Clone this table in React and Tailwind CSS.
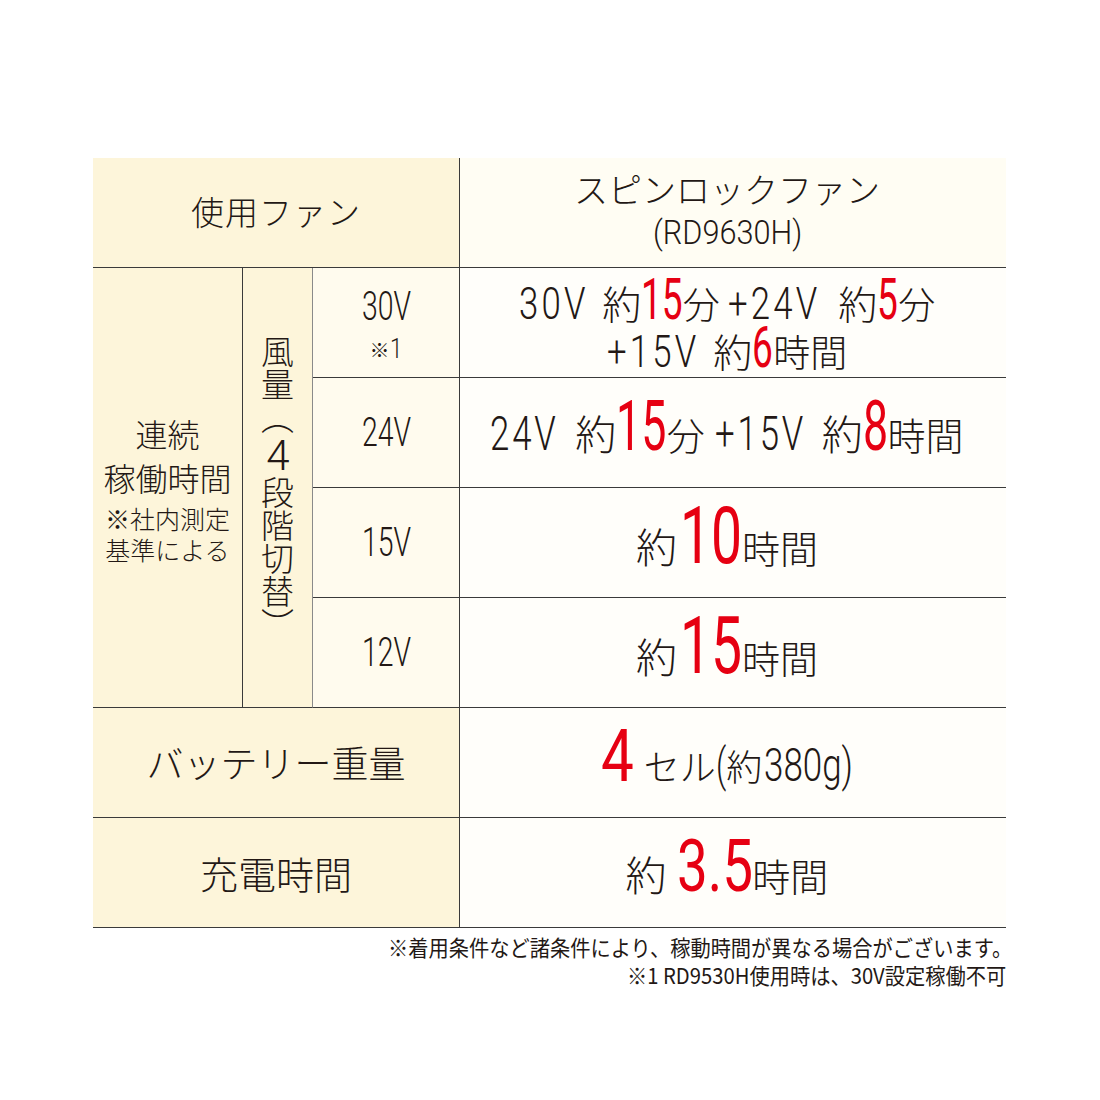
import React, { useLayoutEffect, useRef, useState } from 'react';

const jp = "font-['Noto_Sans_CJK_JP',sans-serif] font-light";
const rb = "font-['Roboto','Liberation_Sans',sans-serif]";

// condensed text: squeezes horizontally and keeps the layout width in step
function Cn({ children, s = 0.8, className = '', outer = '' }) {
  const ref = useRef(null);
  const [w, setW] = useState();
  useLayoutEffect(() => {
    const measure = () => ref.current && setW(ref.current.offsetWidth * s);
    measure();
    if (document.fonts) document.fonts.ready.then(measure);
  }, [s]);
  return (
    <span className={`inline-block whitespace-nowrap ${outer}`} style={{ width: w }}>
      <span ref={ref} className={`inline-block origin-left whitespace-nowrap ${className}`} style={{ transform: `scaleX(${s})` }}>
        {children}
      </span>
    </span>
  );
}

function Red({ children, size, s, outer = '' }) {
  return <Cn s={s} outer={outer} className={`${rb} ${size} font-normal text-[#e60012] leading-none`}>{children}</Cn>;
}

function Num({ children, size, s, className = '', outer = '' }) {
  return <Cn s={s} outer={outer} className={`${rb} ${size} font-light leading-none ${className}`}>{children}</Cn>;
}

function Jp({ children, className = '', lead = 'leading-none' }) {
  return <span className={`${jp} ${lead} whitespace-nowrap ${className}`}>{children}</span>;
}

const line = 'border-[#3a3a3a]';
const head = `bg-[#fdf5da] border-b ${line}`;
const volt = `bg-[#fffbee] border-r border-b ${line} flex flex-col items-center justify-center`;
const val = `bg-[#fffefa] border-b ${line} flex flex-col items-center justify-center pr-[12px]`;

function Volt({ v }) {
  return (
    <div className={volt}>
      <Num size="text-[40px]" s={0.71}>{v}</Num>
    </div>
  );
}

function Hours({ n }) {
  return (
    <div className={val}>
      <div className="flex items-baseline pb-[14px]">
        <Jp className="text-[41px]">約</Jp>
        <Red size="text-[80px]" s={0.69} outer="ml-[3px]">{n}</Red>
        <Jp className="text-[38px]">時間</Jp>
      </div>
    </div>
  );
}

export default function App() {
  return (
    <div className="w-[1100px] h-[1100px] bg-white text-[#231815] pt-[158px] pl-[93px]">
      <div className="grid grid-cols-[150px_70px_147px_546px] grid-rows-[repeat(7,110px)] w-[913px]">
        {/* header */}
        <div className={`col-span-3 ${head} border-r flex items-center justify-center`}>
          <Jp className="text-[33px] tracking-[1px] mt-[-2px]">使用ファン</Jp>
        </div>
        <div className={`bg-[#fffdf3] border-b ${line} flex flex-col items-center justify-center pr-[12px]`}>
          <Jp className="text-[34px] mt-[-4px]">スピンロックファン</Jp>
          <div className="mt-[10px]">
            <Num size="text-[33px]" s={0.93}>(RD9630H)</Num>
          </div>
        </div>

        {/* running time */}
        <div className={`row-span-4 ${head} border-r flex flex-col items-center justify-center`}>
          <Jp className="text-[32px]" lead="leading-[44px]">連続</Jp>
          <Jp className="text-[32px]" lead="leading-[44px]">稼働時間</Jp>
          <span className={`${jp} text-[25px] leading-[31px] mt-[4px] text-center whitespace-nowrap`}>
            ※社内測定
            <br />
            基準による
          </span>
        </div>
        <div className={`row-span-4 ${head} border-r border-r-[#8a8a8a] flex items-center justify-center`}>
          <span className={`${jp} text-[33px] leading-none [writing-mode:vertical-rl]`}>
            風量（<span className={`[text-combine-upright:all] ${rb} font-light text-[42px]`}>4</span>段階切替）
          </span>
        </div>

        <div className={volt}>
          <div className="mt-[6px]">
            <Num size="text-[40px]" s={0.71}>30V</Num>
          </div>
          <div className="flex items-baseline mt-[8px]">
            <Jp className="text-[20px]">※</Jp>
            <Num size="text-[28px]" s={0.8}>1</Num>
          </div>
        </div>
        <div className={val}>
          <div className="flex items-baseline">
            <Num size="text-[44px]" s={0.79} className="tracking-[4px]">30V</Num>
            <Jp className="text-[39px] ml-[14px]">約</Jp>
            <Red size="text-[58px]" s={0.64}>15</Red>
            <Jp className="text-[37px]">分</Jp>
            <Num size="text-[44px]" s={0.79} className="tracking-[4px]" outer="ml-[8px]">+24V</Num>
            <Jp className="text-[39px] ml-[18px]">約</Jp>
            <Red size="text-[58px]" s={0.64}>5</Red>
            <Jp className="text-[37px]">分</Jp>
          </div>
          <div className="flex items-baseline mt-[-10px]">
            <Num size="text-[44px]" s={0.79} className="tracking-[4px]">+15V</Num>
            <Jp className="text-[39px] ml-[14px]">約</Jp>
            <Red size="text-[58px]" s={0.64}>6</Red>
            <Jp className="text-[37px]">時間</Jp>
          </div>
        </div>

        <Volt v="24V" />
        <div className={val}>
          <div className="flex items-baseline pb-[14px]">
            <Num size="text-[49px]" s={0.71} className="tracking-[4px]">24V</Num>
            <Jp className="text-[41px] ml-[16px]">約</Jp>
            <Red size="text-[70px]" s={0.64}>15</Red>
            <Jp className="text-[38px]">分</Jp>
            <Num size="text-[49px]" s={0.71} className="tracking-[4px]" outer="ml-[10px]">+15V</Num>
            <Jp className="text-[41px] ml-[16px]">約</Jp>
            <Red size="text-[70px]" s={0.64}>8</Red>
            <Jp className="text-[38px]">時間</Jp>
          </div>
        </div>

        <Volt v="15V" />
        <Hours n="10" />

        <Volt v="12V" />
        <Hours n="15" />

        {/* battery weight */}
        <div className={`col-span-3 ${head} border-r flex items-center justify-center`}>
          <Jp className="text-[37px]">バッテリー重量</Jp>
        </div>
        <div className={val}>
          <div className="flex items-baseline pb-[12px]">
            <Red size="text-[73px]" s={0.8}>4</Red>
            <Jp className="text-[36px] ml-[10px]">セル</Jp>
            <Num size="text-[46px]" s={0.7}>(</Num>
            <Jp className="text-[36px]">約</Jp>
            <Num size="text-[46px]" s={0.76} outer="ml-[2px]">380g)</Num>
          </div>
        </div>

        {/* charge time */}
        <div className={`col-span-3 ${head} border-r flex items-center justify-center`}>
          <Jp className="text-[38px]">充電時間</Jp>
        </div>
        <div className={val}>
          <div className="flex items-baseline pb-[12px]">
            <Jp className="text-[41px]">約</Jp>
            <Red size="text-[73px]" s={0.75} outer="ml-[10px]">3.5</Red>
            <Jp className="text-[38px]">時間</Jp>
          </div>
        </div>
      </div>

      <div className="w-[913px] flex flex-col items-end mt-[6px]">
        <div className="mr-[-6px]">
          <Cn s={0.92} className={`${jp} font-normal text-[22px] leading-[24px]`}>
            ※着用条件など諸条件により、稼動時間が異なる場合がございます。
          </Cn>
        </div>
        <Cn s={0.92} className={`${jp} font-normal text-[22px] leading-[24px]`}>
          ※1 RD9530H使用時は、30V設定稼働不可
        </Cn>
      </div>
    </div>
  );
}
